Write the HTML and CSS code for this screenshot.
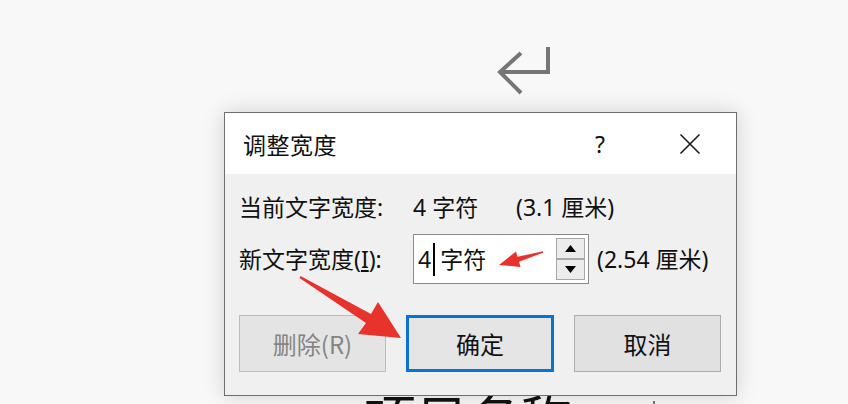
FILE: index.html
```html
<!DOCTYPE html>
<html lang="zh-CN">
<head>
<meta charset="utf-8">
<title>调整宽度</title>
<link rel="stylesheet" href="styles.css">
</head>
<body>
<div class="doc">
  <svg class="para-mark" width="60" height="52" viewBox="0 0 60 52">
    <polyline points="52,2 52,27 4,27" fill="none" stroke="#767676" stroke-width="4"/>
    <polyline points="25,8 4,27 25,48" fill="none" stroke="#767676" stroke-width="4"/>
  </svg>
  <div class="doc-line">项目名称：<svg class="small-mark" width="30" height="40" viewBox="0 0 30 40"><polyline points="26,4 26,22 3,22" fill="none" stroke="#777" stroke-width="2"/><polyline points="12,12 3,22 12,32" fill="none" stroke="#777" stroke-width="2"/></svg></div>
</div>

<div class="dialog">
  <div class="titlebar">
    <span class="title">调整宽度</span>
    <span class="help">?</span>
    <span class="close">
      <svg width="22" height="22" viewBox="0 0 22 22"><path d="M1.5 1.5 L20.5 20.5 M20.5 1.5 L1.5 20.5" stroke="#1a1a1a" stroke-width="1.6" fill="none"/></svg>
    </span>
  </div>
  <div class="body">
    <div class="row">
      <span class="label">当前文字宽度:</span>
      <span class="value">4 字符</span>
      <span class="cm">(3.1 厘米)</span>
    </div>
    <div class="row row-input">
      <span class="label">新文字宽度(<u>I</u>):</span>
      <div class="field">
        <span class="field-text">4</span><span class="caret"></span><span class="field-text">字符</span>
        <div class="spin">
          <div class="spin-btn"><svg width="11" height="7" viewBox="0 0 11 7"><polygon points="5.5,0 11,7 0,7" fill="#000"/></svg></div>
          <div class="spin-btn"><svg width="11" height="7" viewBox="0 0 11 7"><polygon points="0,0 11,0 5.5,7" fill="#000"/></svg></div>
        </div>
      </div>
      <span class="cm2">(2.54 厘米)</span>
    </div>
    <div class="buttons">
      <div class="btn disabled">删除(R)</div>
      <div class="btn primary">确定</div>
      <div class="btn">取消</div>
    </div>
  </div>
</div>

<svg class="annot" width="848" height="404" viewBox="0 0 848 404">
  <polygon fill="#e8322c" points="300.5,276 371,314 378,302 401,338 358,334 366,323 299.5,278"/>
  <polygon fill="#e8322c" points="543,251.3 517.5,256.8 516,251.5 499,265 520.5,267 519,261.7 543,252.7"/>
</svg>
</body>
</html>
```

FILE: styles.css
```css
html, body {
  margin: 0;
  padding: 0;
}
body {
  width: 848px;
  height: 404px;
  overflow: hidden;
  position: relative;
  background: #f8f8f8;
  font-family: "Noto Sans", "Noto Sans CJK SC", sans-serif;
  color: #111;
}

.doc {
  display: flex;
  flex-direction: column;
  height: 404px;
  overflow: hidden;
}
.para-mark {
  display: block;
  flex: none;
  margin: 45px 0 0 496px;
}
.doc-line {
  flex: none;
  margin: 290px 0 0 364px;
  font-family: "Noto Sans CJK SC", sans-serif;
  font-size: 52px;
  line-height: 60px;
  color: #111;
  display: flex;
  align-items: center;
  white-space: nowrap;
}
.small-mark {
  margin-left: 4px;
}

.dialog {
  position: absolute;
  left: 224px;
  top: 112px;
  width: 511px;
  height: 282px;
  border: 1px solid #6e6e6e;
  background: #f0f0f0;
  box-shadow: 0 0 20px rgba(0, 0, 0, 0.16);
  display: flex;
  flex-direction: column;
}

.titlebar {
  height: 61px;
  background: #fff;
  display: flex;
  align-items: center;
  padding-left: 18px;
  padding-right: 26px;
  font-family: "Noto Sans CJK SC", sans-serif;
  font-size: 23px;
}
.title {
  flex: 1;
  letter-spacing: 0.5px;
}
.help {
  width: 40px;
  text-align: center;
  font-family: "Noto Sans", sans-serif;
  font-size: 23px;
}
.close {
  width: 40px;
  margin-left: 50px;
  display: flex;
  justify-content: center;
  align-items: center;
}

.body {
  flex: 1;
  padding: 18px 14px 0 14px;
  font-size: 23px;
}
.row {
  display: flex;
  align-items: center;
  height: 30px;
  line-height: 30px;
  white-space: nowrap;
}
.label {
  width: 174px;
}
.label u {
  text-decoration: underline;
  text-underline-offset: 2px;
}
.value {
  width: 103px;
}
.row-input {
  margin-top: 12px;
  height: 50px;
}
.field {
  box-sizing: border-box;
  width: 176px;
  height: 50px;
  border: 1px solid #8a8a8a;
  background: #fff;
  display: flex;
  align-items: center;
  padding-left: 4px;
}
.caret {
  display: inline-block;
  width: 2px;
  height: 33px;
  background: #000;
  margin: 0 5px 0 2px;
}
.spin {
  margin-left: auto;
  margin-right: 3px;
  display: flex;
  flex-direction: column;
}
.spin-btn {
  box-sizing: border-box;
  width: 29px;
  height: 21px;
  border: 1px solid #a8a8a8;
  background: #ececec;
  display: flex;
  align-items: center;
  justify-content: center;
}
.cm2 {
  margin-left: 8px;
}

.buttons {
  display: flex;
  gap: 20px;
  margin-top: 31px;
}
.btn {
  box-sizing: border-box;
  width: 147px;
  height: 57px;
  border: 1px solid #adadad;
  background: #e1e1e1;
  display: flex;
  align-items: center;
  justify-content: center;
  font-family: "Noto Sans CJK SC", sans-serif;
  font-size: 24px;
  color: #111;
}
.btn.disabled {
  color: #848484;
  background: #e4e4e4;
  border-color: #bdbdbd;
}
.btn.primary {
  width: 148px;
  border: 3px solid #0a72d4;
  background: #e5e5e5;
}

.annot {
  position: absolute;
  left: 0;
  top: 0;
  pointer-events: none;
}
```
